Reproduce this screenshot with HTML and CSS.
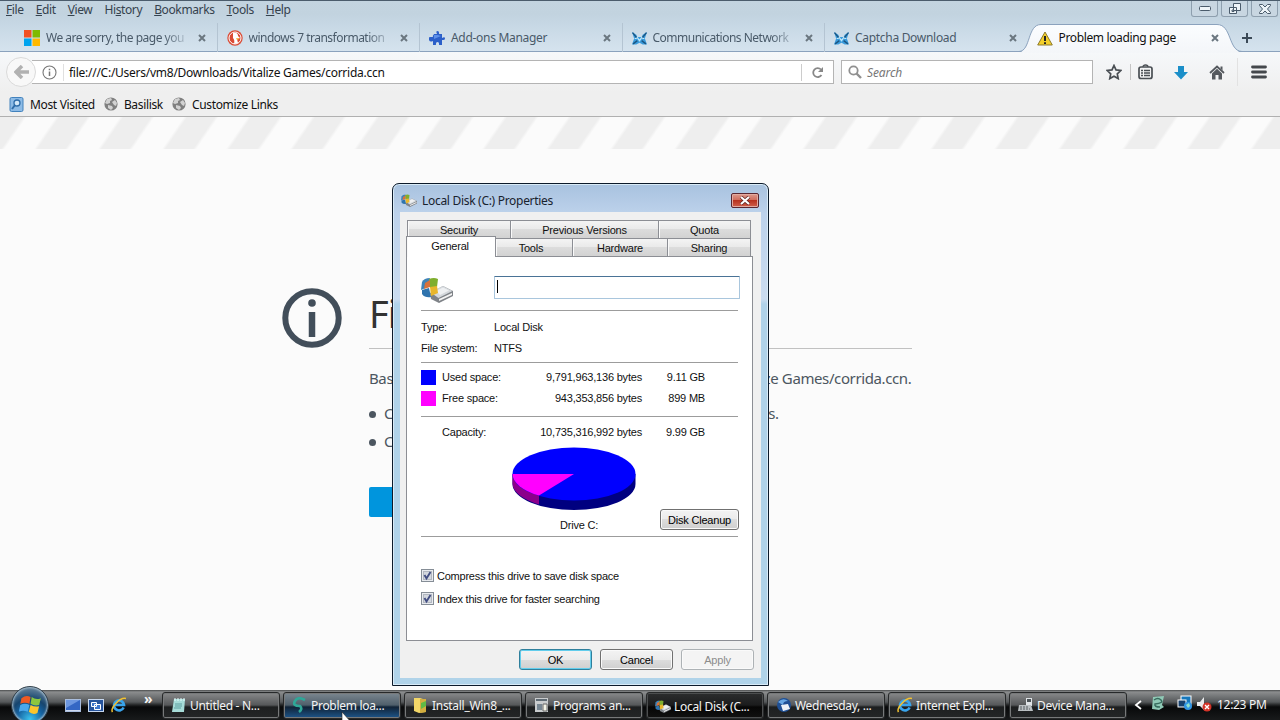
FILE: index.html
```html
<!DOCTYPE html>
<html lang="en">
<head>
  <meta charset="UTF-8">
  <title>Problem loading page</title>
  <link rel="stylesheet" href="styles.css">
</head>
<body>
  <!-- shared icons -->
  <svg class="defs" width="0" height="0">
    <symbol id="x" viewBox="0 0 8 8"><path d="M1 1l6 6M7 1L1 7" stroke="#6b7780" stroke-width="2"/></symbol>
    <symbol id="wolf" viewBox="0 0 14 12"><path d="M0 0l4 2.500 1 2h4l1-2L14 0l-2 6 2 5.500h-4L7 10l-3 1.500H0L2 6z" fill="#3a9bdc"/><path d="M.500 .500L5 6M13.500.500L9 6M1 11l4-3M13 11L9 8" stroke="#1b5784" stroke-width="1.300"/><path d="M4.500 4.500L7 8l2.500-3.500M2.500 6h2M9.500 6h2" fill="none" stroke="#bfe8fb" stroke-width="1.100"/></symbol>
    <symbol id="globe" viewBox="0 0 14 14"><circle cx="7" cy="7" r="6.600" fill="#808080"/><path d="M3 2l4-1 1 2-2 1 0 2-3 1-2-1zM8 5l3-2 2 3-1 3-2-1zM4 8l4 1 1 2-2 2-3-2z" fill="#d2d2d2"/></symbol>
    <symbol id="disk" viewBox="0 0 32 26"><path d="M9 16l13-7 10 5v5l-14 7-8-4z" fill="#7f8388"/><path d="M9 15l13-6 9.500 5-14 7z" fill="#d4d8dc"/><path d="M15 14l7-3.500 6 3-9 4.500z" fill="#eef0f2"/><path d="M18 22l13-6v2l-13 6z" fill="#f3f3f3"/><path d="M1 5q2-4 8-4l-2 9-7 3z" fill="#3f83b8"/><path d="M8 2q5-2 9 0l-1 8-7 1z" fill="#7fae2e"/><path d="M1 13l7-2 2 9q-6 1-9-3z" fill="#2f74ae"/><path d="M9 10l7-1 1 7-7 3z" fill="#e8b62c"/><path d="M4 6l5-3 0 7-6 2z" fill="#d9713a"/></symbol>
    <symbol id="ie" viewBox="0 0 16 16"><path d="M12.600 10.500A5 5 0 1 1 13 8H4" fill="none" stroke="#39a4ec" stroke-width="2.700"/><path d="M1.500 15C-1 11 9 0 15 1.500" fill="none" stroke="#f1c232" stroke-width="1.500"/></symbol>
    <symbol id="flag" viewBox="0 0 20 20"><path d="M2 4q4-3 8-1L9 9Q5 7 1 9z" fill="#ee5a24"/><path d="M11 3q4 3 8 1l-1.500 6q-4 1-7.500-1z" fill="#8cc63f"/><path d="M1 10q4-2 8 0l-1.500 6q-4-2-8 0z" fill="#4aa8ec"/><path d="M10 10q4 2 7.500 1L16 17q-4 2-7.500-1z" fill="#fcc52c"/></symbol>
  </svg>

  <div class="browser">
    <div class="menubar">
      <nav class="menus">
        <span><u>F</u>ile</span><span><u>E</u>dit</span><span><u>V</u>iew</span><span>Hi<u>s</u>tory</span><span><u>B</u>ookmarks</span><span><u>T</u>ools</span><span><u>H</u>elp</span>
      </nav>
      <div class="winbtns">
        <span><svg width="12" height="6"><rect x=".5" y=".5" width="11" height="4" rx="1" fill="#eef4f8" stroke="#4a5b6b"/></svg></span>
        <span><svg width="12" height="12"><path d="M4.500.5h7v7h-7zM.5 4.500h7v6h-7zM3 7h2v1.500H3z" fill="#eef4f8" stroke="#4a5b6b"/></svg></span>
        <span><svg width="12" height="10"><path d="M.5.5h3L6 3 8.500.5h3v1L8.500 5l3 3.500v1h-3L6 7 3.500 9.500h-3v-1l3-3.500-3-3.500z" fill="#eef4f8" stroke="#4a5b6b"/></svg></span>
      </div>
    </div>

    <div class="tabs">
      <div class="tab">
        <svg width="16" height="16"><path d="M0 0h7.500v7.500H0z" fill="#f25022"/><path d="M8.500 0H16v7.500H8.500z" fill="#7fba00"/><path d="M0 8.500h7.500V16H0z" fill="#00a4ef"/><path d="M8.500 8.500H16V16H8.500z" fill="#ffb900"/></svg>
        <span class="label fade">We are sorry, the page you</span><svg class="close"><use href="#x"/></svg>
      </div>
      <div class="tab">
        <svg width="16" height="16"><circle cx="8" cy="8" r="7.700" fill="#db4b35"/><circle cx="8" cy="8" r="6" fill="none" stroke="#fff"/><path d="M6 3q5-1 5 3l2 2-3 1 1 4-4 1q1-4-1-6z" fill="#fff"/><path d="M9 8l4 .500-3 1.500z" fill="#f4b33d"/></svg>
        <span class="label fade">windows 7 transformation</span><svg class="close"><use href="#x"/></svg>
      </div>
      <div class="tab">
        <svg width="16" height="16"><path d="M1 7h3q-.500-1.500.500-2L5 4h3Q6.500 1 8.500 1T10 4h3v4q3-1.500 3 .500T13 10v5h-3q.500-3-1.500-3T7 15H4v-4q-3 1.500-4-1T1 7z" fill="#2b5fc9"/><path d="M5 5h4l3 1-7 3z" fill="#5d8fe8"/></svg>
        <span class="label">Add-ons Manager</span><svg class="close"><use href="#x"/></svg>
      </div>
      <div class="tab">
        <svg width="15" height="13"><use href="#wolf"/></svg>
        <span class="label fade">Communications Network</span><svg class="close"><use href="#x"/></svg>
      </div>
      <div class="tab last">
        <svg width="15" height="13"><use href="#wolf"/></svg>
        <span class="label">Captcha Download</span><svg class="close"><use href="#x"/></svg>
      </div>
      <div class="tab active">
        <svg class="shape" width="224" height="30"><defs><linearGradient id="tg" x2="0" y2="1"><stop offset="0" stop-color="#fbfdff"/><stop offset="1" stop-color="#f4f6f9"/></linearGradient></defs><path d="M0 29.500C12 28 8 1.500 22 1.500H198C213 1.500 209 28 223 29.500V30H0z" fill="url(#tg)"/><path d="M0 28.500C12 28 8 1.500 22 1.500H198C213 1.500 209 28 223 28.500" fill="none" stroke="#8ba2bd"/></svg>
        <svg width="16" height="15"><path d="M8 1l7.300 13H.700z" fill="#f4d02b" stroke="#8e7b2e"/><path d="M8 5v5M8 11.300v1.700" stroke="#222" stroke-width="2"/></svg>
        <span class="label">Problem loading page</span><svg class="close"><use href="#x"/></svg>
      </div>
      <svg class="plus" width="12" height="12"><path d="M6 1v10M1 6h10" stroke="#3b4a57" stroke-width="2"/></svg>
    </div>

    <div class="navbar">
      <div class="back"><svg width="15" height="14"><path d="M8 1L2 7l6 6M2 7h13" fill="none" stroke="#b1b1b1" stroke-width="3.500"/></svg></div>
      <div class="url">
        <svg width="15" height="15"><circle cx="7.500" cy="7.500" r="6.500" fill="none" stroke="#777" stroke-width="1.100"/><path d="M7.500 6.500v4.500M7.500 3.700v1.600" stroke="#777" stroke-width="1.500"/></svg>
        <span class="address">file:///C:/Users/vm8/Downloads/Vitalize Games/corrida.ccn</span>
        <span class="reload"><svg width="13" height="13"><path d="M10.500 9A4.500 4.500 0 1 1 10 3.500" fill="none" stroke="#888" stroke-width="1.800"/><path d="M12 1v5H7z" fill="#888"/></svg></span>
      </div>
      <div class="search">
        <svg width="14" height="14"><circle cx="5.500" cy="5.500" r="4.200" fill="none" stroke="#909090" stroke-width="1.800"/><path d="M8.500 8.500l4.500 4.500" stroke="#909090" stroke-width="2.400"/></svg>
        <span>Search</span>
      </div>
      <div class="tools">
        <svg width="16" height="16"><path d="M8 1.500l2 4.400 4.800.600-3.500 3.300.900 4.800L8 12.200l-4.200 2.400.900-4.800L1.200 6.500 6 5.900z" fill="none" stroke="#4a4f54" stroke-width="1.700"/></svg>
        <i class="sep"></i>
        <svg width="15" height="16"><rect x="1" y="3" width="13" height="11.500" rx="2" fill="none" stroke="#4a4f54" stroke-width="1.700"/><path d="M5 3q0-2 2.500-2T10 3M3 6.500h2M6 6.500h6M3 9h2M6 9h6M3 11.500h2M6 11.500h6" fill="none" stroke="#4a4f54" stroke-width="1.300"/></svg>
        <svg class="down" width="14" height="15"><path d="M4 1h6v6h4l-7 7.500L0 7h4z" fill="#1b8fc9"/></svg>
        <svg class="home" width="16" height="15"><path d="M1 8l7-6.500L15 8" fill="none" stroke="#55595e" stroke-width="1.800"/><path d="M11.500 1.500h2v4l-2-2zM3 8.500l5-4.700 5 4.700V14.500H9.500V10h-3v4.500H3z" fill="#55595e"/></svg>
        <i class="sep tall"></i>
        <svg class="burger" width="16" height="14"><path d="M1.500 2h13M1.500 7h13M1.500 12h13" stroke="#44484c" stroke-width="2.800" stroke-linecap="round"/></svg>
      </div>
    </div>

    <div class="bookmarks">
      <svg width="15" height="15"><rect x="1" y=".5" width="13" height="14" rx="1.500" fill="#8dbbe6" stroke="#4282bd"/><circle cx="8" cy="6" r="3" fill="#d4e8f8" stroke="#2e6ca8" stroke-width="1.300"/><path d="M6 8l-3 4" stroke="#2e6ca8" stroke-width="2"/></svg>
      <span>Most Visited</span>
      <svg width="14" height="14"><use href="#globe"/></svg><span>Basilisk</span>
      <svg width="14" height="14"><use href="#globe"/></svg><span>Customize Links</span>
    </div>
  </div>

  <main class="page">
    <div class="stripes"></div>
    <div class="error">
      <svg class="info" width="60" height="60"><circle cx="30" cy="30" r="26.700" fill="none" stroke="#424e5a" stroke-width="6"/><circle cx="30" cy="15" r="3.800" fill="#424e5a"/><path d="M30 24v25" stroke="#424e5a" stroke-width="6.500"/></svg>
      <div class="message">
        <h1>File not found</h1>
        <p>Basilisk can’t find the file at /C:/Users/vm8/Downloads/Vitalize Games/corrida.ccn.</p>
        <ul>
          <li>Check the file name for capitalization or other typing errors.</li>
          <li>Check to see if the file was moved, renamed or deleted.</li>
        </ul>
        <button class="retry">Try Again</button>
      </div>
    </div>
  </main>

  <div class="dialog">
    <div class="titlebar">
      <svg width="16" height="13"><use href="#disk"/></svg>
      <span>Local Disk (C:) Properties</span>
      <div class="red"><svg width="12" height="9"><path d="M2 1l8 7M10 1L2 8" stroke="#5e2420" stroke-width="3.600"/><path d="M2 1l8 7M10 1L2 8" stroke="#fff" stroke-width="2.200"/></svg></div>
    </div>
    <div class="client">
      <div class="sheet-tabs row1"><span>Security</span><span>Previous Versions</span><span>Quota</span></div>
      <div class="sheet-tabs row2"><span class="on">General</span><span>Tools</span><span>Hardware</span><span>Sharing</span></div>
      <div class="sheet">
        <div class="name">
          <svg width="32" height="26"><use href="#disk"/></svg>
          <div class="field"></div>
        </div>
        <div class="facts">
          <span>Type:</span><span>Local Disk</span>
          <span>File system:</span><span>NTFS</span>
        </div>
        <div class="space">
          <i class="used"></i><span>Used space:</span><b>9,791,963,136 bytes</b><b>9.11 GB</b>
          <i class="free"></i><span>Free space:</span><b>943,353,856 bytes</b><b>899 MB</b>
        </div>
        <div class="drive">
          <div class="space cap"><i></i><span>Capacity:</span><b>10,735,316,992 bytes</b><b>9.99 GB</b></div>
          <svg class="pie" width="124" height="64">
            <path d="M.5 27v10a61.500 26 0 0 0 123 0V27z" fill="#000080"/>
            <path d="M.5 27v10a61.500 26 0 0 0 26.500 20.500V40z" fill="#8b008b"/>
            <ellipse cx="62" cy="27" rx="61.500" ry="26.500" fill="#00f"/>
            <path d="M62 27H.5A61.500 26.500 0 0 0 27 48.600z" fill="#f0f"/>
          </svg>
          <div class="drive-foot"><span>Drive C:</span><button>Disk Cleanup</button></div>
        </div>
        <div class="checks">
          <label><svg width="13" height="13"><rect x=".5" y=".5" width="12" height="12" fill="#e9ebef" stroke="#858d96"/><rect x="2.500" y="2.500" width="8" height="8" fill="#d3d7de" stroke="#b2b7c0"/><path d="M3.500 6l2 3.500L9.500 3" fill="none" stroke="#424d82" stroke-width="1.900"/></svg><span>Compress this drive to save disk space</span></label>
          <label><svg width="13" height="13"><rect x=".5" y=".5" width="12" height="12" fill="#e9ebef" stroke="#858d96"/><rect x="2.500" y="2.500" width="8" height="8" fill="#d3d7de" stroke="#b2b7c0"/><path d="M3.500 6l2 3.500L9.500 3" fill="none" stroke="#424d82" stroke-width="1.900"/></svg><span>Index this drive for faster searching</span></label>
        </div>
      </div>
      <div class="actions"><button class="ok">OK</button><button>Cancel</button><button disabled>Apply</button></div>
    </div>
  </div>

  <footer class="taskbar">
    <div class="orb"><svg width="24" height="24" viewBox="-1 0 21 20"><use href="#flag" width="20" height="20"/></svg></div>
    <div class="quick">
      <svg width="16" height="13"><rect x=".5" y=".5" width="15" height="12" fill="#3567c4" stroke="#a9bddd"/><path d="M1 1h14L1 9z" fill="#6d97e0"/><path d="M1 11.500h14" stroke="#cdd9ee"/></svg>
      <svg width="16" height="13"><rect x=".5" y=".5" width="15" height="12" fill="#27549c" stroke="#c6d7ef"/><path d="M3.500 3.500h5v4h-5zM6.500 5.500h6v5h-6z" fill="#3f76cb" stroke="#fff"/></svg>
      <svg width="16" height="16"><use href="#ie"/></svg>
      <span class="more">»</span>
    </div>
    <div class="tasks">
      <div class="task"><svg width="16" height="16"><path d="M3 2h11l-1 13H1z" fill="#a7dcd8"/><path d="M4 1v3M7 1v3M10 1v3M13 1v3" stroke="#e9ffff"/><path d="M4 7h7M4 9h7M3 11h7" stroke="#5d9f9f"/></svg><span>Untitled - N...</span></div>
      <div class="task hover"><svg width="16" height="16"><path d="M13 3Q6-1 3 4t5 5q3 3-1 6" fill="none" stroke="#2fa798" stroke-width="2.600"/></svg><span>Problem loa...</span></div>
      <div class="task"><svg width="16" height="16"><path d="M1 1h6l6 2v12l-7 1-5-2z" fill="#f3d768"/><path d="M7 2h6v13l-6 1z" fill="#d3ae3f"/><path d="M8 6l5-2v5l-5 3z" fill="#5fbb46"/></svg><span>Install_Win8_...</span></div>
      <div class="task"><svg width="16" height="16"><rect x="1" y="1" width="13" height="14" fill="#c9ccce"/><path d="M2 3h11" stroke="#5f6b74" stroke-width="2"/><path d="M3 7h5v6H3z" fill="#778692"/><path d="M9 7h4v7H9z" fill="#f3f3e7" stroke="#666"/></svg><span>Programs an...</span></div>
      <div class="task pressed"><svg width="16" height="13"><use href="#disk"/></svg><span>Local Disk (C...</span></div>
      <div class="task"><svg width="16" height="16"><circle cx="8" cy="8" r="7" fill="#1f4f94"/><path d="M2 5q5-5 10-1-5 0-5 4z" fill="#67a6e3"/><path d="M5 8l7-1 2 5-7 2z" fill="#edf2f7"/></svg><span>Wednesday, ...</span></div>
      <div class="task"><svg width="16" height="16"><use href="#ie"/></svg><span>Internet Expl...</span></div>
      <div class="task"><svg width="16" height="16"><path d="M8 1h6v8H8z" fill="#dfe3e6"/><path d="M9 2h4v3H9z" fill="#4c5357"/><path d="M1 8h12l2 6H0z" fill="#babfc2"/><path d="M2 10h9M2 12h10" stroke="#575d61" stroke-dasharray="2 1"/></svg><span>Device Mana...</span></div>
    </div>
    <div class="tray">
      <svg width="8" height="10"><path d="M7 1L2 5l5 4" fill="none" stroke="#fff" stroke-width="1.800"/></svg>
      <svg class="pc" width="16" height="16"><path d="M3 2l11-1-2 9 2 2-5 3-7-1z" fill="#90c9b6"/><path d="M4 5q4-3 7 0T5 9q-1 3 5 3" fill="none" stroke="#386c5e" stroke-width="1.500"/></svg>
      <svg class="net" width="16" height="16"><rect x="4" y="1" width="10" height="8" fill="#1677bb" stroke="#fff"/><rect x="1" y="5" width="8" height="7" fill="#17416e" stroke="#fff"/><circle cx="11" cy="11" r="4" fill="#3295e3"/><path d="M9 10l3-2 1 3-2 2z" fill="#8fe3ce"/></svg>
      <svg class="snd" width="16" height="16"><path d="M1 6h3l4-5v13l-4-4H1z" fill="#e8eaec"/><circle cx="11" cy="11" r="4.500" fill="#d43328"/><path d="M9 9l4 4M13 9l-4 4" stroke="#fff" stroke-width="1.400"/></svg>
      <span class="clock">12:23 PM</span>
    </div>
    <svg class="cursor" width="10" height="10"><path d="M1 0v14l9-4z" fill="#fff" stroke="#222" stroke-width=".6"/></svg>
  </footer>
</body>
</html>
```
FILE: styles.css
```css
* {
  box-sizing: border-box;
}
body {
  margin: 0;
  width: 1280px;
  height: 720px;
  overflow: hidden;
  display: flex;
  flex-direction: column;
  position: relative;
  font-family: "Noto Sans", "Open Sans", sans-serif;
  font-size: 12px;
  letter-spacing: -0.3px;
  color: #111;
  background: #fbfbfb;
}
svg {
  display: block;
  flex: none;
}
.defs {
  position: absolute;
}
span, b, button {
  white-space: nowrap;
}

/* browser chrome */
.browser {
  height: 117px;
  flex: none;
  background: #efefef;
  border-bottom: 1px solid #b0b0b0;
}
.menubar {
  height: 23px;
  display: flex;
  justify-content: space-between;
  border-top: 1px solid #4b5c6c;
  background: linear-gradient(#c3d4e0, #c2d3df 60%, #c6d7e4);
}
.menus {
  display: flex;
  gap: 12px;
  padding-left: 6px;
  line-height: 18px;
  color: #35424e;
  letter-spacing: -0.38px;
}
.winbtns {
  display: flex;
  gap: 3px;
  padding-right: 2px;
}
.winbtns span {
  width: 27px;
  height: 16px;
  display: flex;
  align-items: center;
  justify-content: center;
  border: 1px solid #8e9fae;
  border-top: 0;
  border-radius: 0 0 3px 3px;
  background: #c8d6e1;
}
.tabs {
  height: 29px;
  display: flex;
  padding-left: 15px;
  background: linear-gradient(#c6d7e4, #d5e3ee);
  border-bottom: 1px solid #8ba2bd;
}
.tab {
  width: 202.5px;
  height: 29px;
  display: flex;
  align-items: center;
  padding: 1px 11px 0 9px;
  flex: none;
  position: relative;
  color: #495a69;
  border-right: 1px solid #b4c4d2;
}
.tab.last {
  border: 0;
}
.tab .label {
  margin-left: 6px;
  width: 151px;
  line-height: 20px;
}
.tab .fade {
  width: 140px;
  margin-right: 11px;
  letter-spacing: -0.5px;
  -webkit-mask-image: linear-gradient(90deg, #000 84%, rgba(0, 0, 0, 0.2));
  mask-image: linear-gradient(90deg, #000 84%, rgba(0, 0, 0, 0.2));
}
.tab .close {
  width: 8px;
  height: 8px;
  margin-left: auto;
}
.tab.active {
  border: 0;
  color: #111;
}
.tab.active > * {
  position: relative;
}
.tab.active .label {
  letter-spacing: -0.36px;
}
.tab.active .shape {
  position: absolute;
  left: -9px;
  top: 0;
}
.plus {
  margin: 9px 0 0 11px;
}
.navbar {
  height: 40px;
  display: flex;
  align-items: center;
  background: linear-gradient(#f6f8fa, #efefef);
}
.back {
  width: 30px;
  height: 30px;
  margin-left: 6px;
  border: 1px solid #dadada;
  border-radius: 50%;
  background: #f8f8f8;
  display: flex;
  align-items: center;
  justify-content: center;
  flex: none;
  position: relative;
}
.url {
  width: 802px;
  height: 24px;
  margin-left: -4px;
  padding-left: 10px;
  display: flex;
  align-items: center;
  background: #fff;
  border: 1px solid #b4b4b4;
  border-left: 0;
}
.address {
  flex: 1;
  margin-left: 6px;
  padding-left: 5px;
  border-left: 1px solid #e0e0e0;
  line-height: 17px;
  letter-spacing: -0.26px;
}
.reload {
  width: 32px;
  height: 17px;
  display: flex;
  align-items: center;
  justify-content: center;
  border-left: 1px solid #ccc;
}
.search {
  width: 252px;
  height: 24px;
  margin-left: 7px;
  padding-left: 6px;
  display: flex;
  align-items: center;
  gap: 5px;
  background: #fff;
  border: 1px solid #b4b4b4;
  font-style: italic;
  letter-spacing: -0.1px;
  color: #777;
}
.tools {
  display: flex;
  align-items: center;
  margin-left: 13px;
}
.sep {
  width: 1px;
  height: 16px;
  margin: 0 7px 0 8px;
  background: #c4c4c4;
}
.sep.tall {
  height: 28px;
  margin: 0 13px 0 12px;
  background: #e2e2e2;
}
.down {
  margin-left: 21px;
}
.home {
  margin-left: 21px;
}
.bookmarks {
  height: 24px;
  display: flex;
  align-items: center;
  padding-left: 9px;
}
.bookmarks span {
  margin: 1px 9px 0 6px;
  line-height: 20px;
  letter-spacing: -0.34px;
}

/* error page */
.page {
  height: 573px;
  flex: none;
}
.stripes {
  height: 32px;
  background: repeating-linear-gradient(124.5deg, #eee 0, #eee 19px, #fbfbfb 22px, #fbfbfb 46px, #eee 49px, #eee 52.74px);
}
.error {
  display: flex;
  margin: 139px 0 0 282px;
}
.message {
  width: 543px;
  margin-left: 27px;
  font-size: 15px;
  letter-spacing: -0.39px;
  color: #4c5660;
}
.message h1 {
  height: 61px;
  margin: 0 0 19px;
  font-size: 38px;
  font-weight: 400;
  line-height: 50px;
  letter-spacing: -1px;
  color: #333;
  border-bottom: 1px solid #c1c1c1;
}
.message p {
  margin: 0;
  line-height: 20px;
  white-space: nowrap;
}
.message ul {
  margin: 11px 0 0;
  padding: 0;
  line-height: 28px;
  letter-spacing: -0.43px;
  list-style: none;
}
.message li::before {
  content: "";
  display: inline-block;
  width: 7px;
  height: 7px;
  margin: 0 8px 1px 0;
  border-radius: 50%;
  background: #4c5660;
}
.retry {
  width: 150px;
  height: 30px;
  margin-top: 32px;
  border: 0;
  border-radius: 2px;
  background: #0095dd;
  color: #fff;
}

/* drive properties window */
.dialog {
  position: absolute;
  left: 392px;
  top: 183px;
  width: 377px;
  height: 503px;
  padding: 0 7px;
  border: 1px solid #0c1a2a;
  border-radius: 7px 7px 0 0;
  background: linear-gradient(#a8c2df, #bdd2eb 30px, #cbdcf0 115px, #b0d2e9 120px, #b0d3e9);
  box-shadow: inset 0 0 0 1px #d9ebf7;
  font-family: "Liberation Sans", sans-serif;
  font-size: 11px;
  letter-spacing: -0.2px;
}
.titlebar {
  height: 28px;
  display: flex;
  align-items: center;
  padding: 4px 2px 0 1px;
  font-family: "Noto Sans", sans-serif;
  font-size: 12px;
  letter-spacing: -0.3px;
  color: #18222e;
}
.titlebar span {
  flex: 1;
  margin-left: 5px;
}
.red {
  width: 28px;
  height: 15px;
  display: flex;
  align-items: center;
  justify-content: center;
  border: 1px solid #5a2630;
  border-radius: 2px;
  background: linear-gradient(#dc9a8e, #cf6a5a 48%, #b8321f 50%, #d1604c);
  box-shadow: inset 0 0 0 1px #e2aaa0;
}
.client {
  height: 466px;
  padding: 8px 8px 0 6px;
  background: #f0f0f0;
}
.sheet-tabs {
  display: flex;
  width: 344px;
  margin-left: 1px;
}
.sheet-tabs span {
  height: 18px;
  line-height: 18px;
  text-align: center;
  border: 1px solid #8c8e94;
  border-width: 1px 1px 0 0;
  background: linear-gradient(#f4f4f4, #e9e9e9 50%, #dcdcdc 50%, #d2d2d2);
  box-shadow: inset 1px 0 0 #fafafa;
}
.row1 span:nth-child(1) {
  width: 104px;
  border-left-width: 1px;
}
.row1 span:nth-child(2) {
  width: 148px;
}
.row1 span:nth-child(3) {
  width: 92px;
}
.row2 span:nth-child(1) {
  width: 90px;
  height: 21px;
  margin: -2px 0 -1px -1px;
  padding-right: 2px;
  border-left-width: 1px;
  background: #fff;
  position: relative;
}
.row2 span:nth-child(2) {
  width: 77px;
  padding-right: 6px;
}
.row2 span:nth-child(3) {
  width: 95px;
}
.row2 span:nth-child(4) {
  width: 83px;
}
.sheet {
  width: 347px;
  height: 385px;
  padding: 19px 14px 0 14px;
  background: #fff;
  border: 1px solid #8c8e94;
}
.name {
  height: 35px;
  display: flex;
  border-bottom: 1px solid #9c9c9c;
}
.name svg {
  margin-top: 1px;
}
.field {
  width: 246px;
  height: 23px;
  margin-left: 41px;
  flex: none;
  padding: 3px 2px;
  border: 1px solid #a9c6dd;
  border-top-color: #4a7396;
  border-radius: 1px;
}
.field::before {
  content: "";
  display: block;
  width: 1px;
  height: 13px;
  background: #000;
}
.facts {
  height: 52px;
  display: grid;
  grid-template-columns: 73px 1fr;
  grid-auto-rows: 21px;
  padding-top: 6px;
  line-height: 21px;
  border-bottom: 1px solid #9c9c9c;
}
.space {
  height: 54px;
  display: grid;
  grid-template-columns: 21px 90px 110px 63px;
  grid-auto-rows: 21px;
  padding-top: 4px;
  line-height: 21px;
  border-bottom: 1px solid #9c9c9c;
}
.space b {
  font-weight: normal;
  text-align: right;
}
.space i {
  width: 15px;
  height: 15px;
  margin-top: 3px;
}
.used {
  background: #00f;
}
.free {
  background: #f0f;
}
.cap {
  height: 30px;
  padding-top: 5px;
  border: 0;
}
.drive {
  height: 120px;
  border-bottom: 1px solid #9c9c9c;
}
.pie {
  margin-left: 91px;
}
.drive-foot {
  display: flex;
  justify-content: space-between;
  padding-left: 139px;
  margin-top: -2px;
}
.drive-foot span {
  padding-top: 10px;
}
.dialog button {
  height: 21px;
  padding: 0;
  font: inherit;
  letter-spacing: inherit;
  color: #000;
  border: 1px solid #707070;
  border-radius: 3px;
  background: linear-gradient(#f3f3f3, #ebebeb 50%, #dddddd 50%, #cfcfcf);
  box-shadow: inset 0 0 0 1px #fafafa;
}
.drive-foot button {
  width: 79px;
  margin-right: -1px;
}
.checks {
  padding-top: 32px;
}
.checks label {
  display: flex;
  align-items: center;
  height: 13px;
  margin-bottom: 10px;
}
.checks span {
  margin-left: 3px;
  letter-spacing: -0.23px;
}
.actions {
  display: flex;
  gap: 8px;
  margin: 8px -1px 0 0;
  justify-content: flex-end;
}
.actions button {
  width: 73px;
}
.dialog .ok {
  border-color: #2f7f9c;
  box-shadow: inset 0 0 0 1px #62cdec;
}
.dialog button:disabled {
  color: #8c8c8c;
  border-color: #adb2b5;
  background: #f4f4f4;
}

/* taskbar */
.taskbar {
  height: 30px;
  flex: none;
  display: flex;
  position: relative;
  color: #f4f4f4;
  background: linear-gradient(#4a4c4d 0, #8b8d8e 2px, #55585a 12px, #222425 15px, #08090a 17px, #181a1b);
}
.orb {
  width: 38px;
  height: 38px;
  margin: -4px 0 0 11px;
  flex: none;
  display: flex;
  align-items: center;
  justify-content: center;
  border-radius: 50%;
  border: 1px solid #34424d;
  background: radial-gradient(circle at 50% 90%, #3cc3ef, #1563a2 35%, #17456e 55%, #8ba1b2 100%);
  box-shadow: inset 0 0 2px 1px #a9bfce;
}
.quick {
  width: 113px;
  display: flex;
  align-items: center;
  gap: 7px;
  padding-left: 16px;
}
.more {
  margin: -13px 0 0 10px;
  font-size: 14px;
  font-weight: bold;
}
.tasks {
  display: flex;
  gap: 3px;
  padding-top: 2px;
}
.task {
  width: 118px;
  height: 27px;
  display: flex;
  align-items: center;
  padding: 0 0 1px 8px;
  border: 1px solid #27292a;
  border-radius: 3px;
  background: linear-gradient(#88898a, #56585a 12px, #1d1f20 14px, #242627);
  box-shadow: inset 0 0 0 1px #77797a;
}
.task span {
  margin-left: 3px;
}
.task.hover {
  background: linear-gradient(#7c8790, #4f5f6b 12px, #102236 14px, #1d568b);
}
.task.pressed {
  padding: 1px 0 0 8px;
  background: linear-gradient(#2c2d2e, #1b1c1d 12px, #060606 14px, #111);
  box-shadow: inset 0 0 0 1px #4c4e4f;
}
.tray {
  display: flex;
  align-items: center;
  padding-left: 7px;
}
.pc {
  margin: -4px 0 0 8px;
}
.net {
  margin: -4px 0 0 11px;
}
.snd {
  margin: -2px 0 0 3px;
}
.clock {
  margin: -1px 0 0 5px;
}
.cursor {
  position: absolute;
  left: 341px;
  top: 22px;
}
```
